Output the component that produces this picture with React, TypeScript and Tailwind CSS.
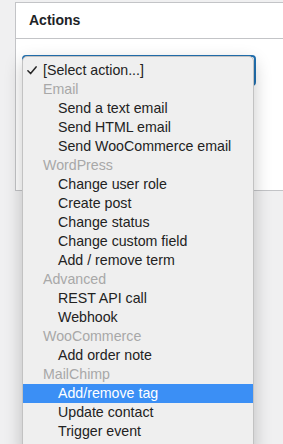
type Row = { label: string; kind: 'group' | 'item' | 'top'; selected?: boolean; checked?: boolean };

const rows: Row[] = [
  { label: '[Select action...]', kind: 'top', checked: true },
  { label: 'Email', kind: 'group' },
  { label: 'Send a text email', kind: 'item' },
  { label: 'Send HTML email', kind: 'item' },
  { label: 'Send WooCommerce email', kind: 'item' },
  { label: 'WordPress', kind: 'group' },
  { label: 'Change user role', kind: 'item' },
  { label: 'Create post', kind: 'item' },
  { label: 'Change status', kind: 'item' },
  { label: 'Change custom field', kind: 'item' },
  { label: 'Add / remove term', kind: 'item' },
  { label: 'Advanced', kind: 'group' },
  { label: 'REST API call', kind: 'item' },
  { label: 'Webhook', kind: 'item' },
  { label: 'WooCommerce', kind: 'group' },
  { label: 'Add order note', kind: 'item' },
  { label: 'MailChimp', kind: 'group' },
  { label: 'Add/remove tag', kind: 'item', selected: true },
  { label: 'Update contact', kind: 'item' },
  { label: 'Trigger event', kind: 'item' },
];

function MenuRow({ row }: { row: Row }) {
  const base = 'relative h-[19px] leading-[19px] text-[14.2px] whitespace-nowrap';
  if (row.kind === 'group') {
    return <div className={`${base} pl-[21px] text-[#a8a8a8]`}>{row.label}</div>;
  }
  if (row.kind === 'top') {
    return (
      <div className={`${base} pl-[21px] text-[#222]`}>
        {row.checked && (
          <svg className="absolute left-[5px] top-[5px]" width="10" height="9" viewBox="0 0 10 9" fill="none">
            <path d="M0.9 4.8 L3.6 7.6 L9.1 0.9" stroke="#262626" strokeWidth="1.5" strokeLinecap="round" strokeLinejoin="round" />
          </svg>
        )}
        {row.label}
      </div>
    );
  }
  return (
    <div className={`${base} pl-[36px] ${row.selected ? 'bg-[#3b8ff5] text-white' : 'text-[#222]'}`}>
      {row.label}
    </div>
  );
}

export default function App() {
  return (
    <div className="relative w-[283px] h-[444px] overflow-hidden bg-[#f0f0f1] font-['Liberation_Sans',Arial,sans-serif]">
      {/* Actions panel */}
      <div className="ml-[15px] mt-[2px] w-[300px] h-[189px] bg-white border border-[#c3c4c7]">
        <div className="h-[36px] border-b border-[#c3c4c7] pl-[13px] flex items-center">
          <span className="text-[14px] font-bold text-[#1d2327]">Actions</span>
        </div>
        <div className="pt-[16px] pl-[6px]">
          <div className="w-[234px] h-[31px] rounded-[4px] border-2 border-[#2271b1] bg-white" />
        </div>
      </div>

      {/* open native dropdown */}
      <div className="absolute left-[22px] top-[56px] w-[232px] h-[400px] pt-[4px] rounded-[5px] bg-[#efefef] border border-[#c2c2c2] shadow-[0_6px_18px_rgba(0,0,0,0.22)] overflow-hidden">
        <div className="-ml-px -mr-px">
          {rows.map((r) => (
            <MenuRow key={r.label} row={r} />
          ))}
        </div>
      </div>
    </div>
  );
}
